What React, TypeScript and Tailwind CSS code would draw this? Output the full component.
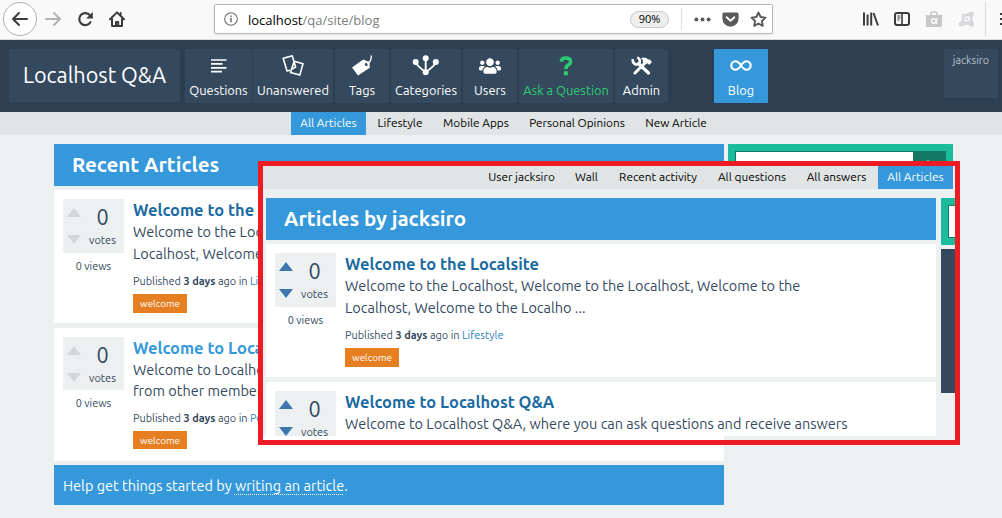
import type { ReactNode } from 'react';
import clsx from 'clsx';
import { FaUsers } from 'react-icons/fa';

/* ---------- Browser toolbar ---------- */

function BrowserBar() {
  return (
    <div className="flex h-10 items-start border-b border-[#dcdcdc] bg-[#f9f9fa] pl-[3px] font-['Open_Sans','Noto_Sans',sans-serif]">
      <div className="mt-[2px] flex size-[34px] shrink-0 items-center justify-center rounded-full border border-[#b1b1b1] bg-white">
        <svg width="18" height="16" viewBox="0 0 18 16" fill="none" stroke="#3c3c3c" strokeWidth="2" strokeLinecap="round" strokeLinejoin="round">
          <path d="M16 8H2M8 2 2 8l6 6" />
        </svg>
      </div>
      <div className="mt-[11px] ml-[7px] flex shrink-0">
        <svg width="18" height="16" viewBox="0 0 18 16" fill="none" stroke="#b4b4b4" strokeWidth="2" strokeLinecap="round" strokeLinejoin="round">
          <path d="M2 8h14M10 2l6 6-6 6" />
        </svg>
        <svg className="ml-[15px]" width="17" height="16" viewBox="0 0 17 16" fill="none" stroke="#3c3c3c" strokeWidth="2.2">
          <path d="M13.4 11.2A6 6 0 1 1 13 4.4" strokeLinecap="round" />
          <path d="M15.8 1v6.6H9.2z" fill="#3c3c3c" stroke="none" />
        </svg>
        <svg className="ml-[14px]" width="18" height="16" viewBox="0 0 18 16" fill="none" stroke="#3c3c3c" strokeWidth="2" strokeLinecap="round" strokeLinejoin="round">
          <path d="M2 8.2 9 1.4l7 6.8" />
          <path d="M4 8v7h10V8" />
          <path d="M8 15v-4h2.2v4M12.6 2v2" />
        </svg>
      </div>
      <div className="mt-1 ml-[88px] flex h-[30px] w-[559px] shrink-0 items-center rounded-[2px] border border-[#b8b8b8] bg-white shadow-[0_1px_3px_rgba(0,0,0,0.08)]">
        <svg className="ml-[9px]" width="14" height="14" viewBox="0 0 14 14" fill="none" stroke="#6b6b6b" strokeWidth="1.1">
          <circle cx="7" cy="7" r="6.3" />
          <path d="M7 6v4.2M7 3.4v1.5" strokeWidth="1.5" />
        </svg>
        <span className="ml-[10px] w-[382px] pt-px text-[13px] leading-5 text-[#7b7b7b]">
          <span className="text-black">localhost</span>/qa/site/blog
        </span>
        <span className="flex h-[17px] w-[39px] items-center justify-center rounded-full border border-[#c6c6c6] bg-[#eeeeee] pt-px text-[11px] text-black">90%</span>
        <span className="ml-3 h-[22px] w-px bg-[#dedede]" />
        <svg className="ml-[12px]" width="17" height="5" viewBox="0 0 17 5" fill="#5a5a5a">
          <circle cx="2.4" cy="2.5" r="2" />
          <circle cx="8.5" cy="2.5" r="2" />
          <circle cx="14.6" cy="2.5" r="2" />
        </svg>
        <svg className="ml-[11px]" width="17" height="15" viewBox="0 0 17 15">
          <path d="M2 .5h13A1.600 1.600 0 0 1 16.600 2v4.600a8.100 8.100 0 0 1-16.200 0V2A1.600 1.600 0 0 1 2 .5z" fill="#5a5a5a" />
          <path d="m4.700 5.200 3.800 3.700 3.800-3.700" fill="none" stroke="#fff" strokeWidth="2" strokeLinecap="round" strokeLinejoin="round" />
        </svg>
        <svg className="ml-[11px]" width="17" height="17" viewBox="0 0 17 17" fill="none" stroke="#5a5a5a" strokeWidth="1.900" strokeLinejoin="round">
          <path d="m8.500 1.500 2.100 4.500 4.900.6-3.600 3.400.9 4.900-4.300-2.400-4.300 2.400.9-4.900L1.500 6.600l4.900-.6z" />
        </svg>
      </div>
      <div className="mt-[2px] ml-[90px] flex h-[34px] items-center">
        <svg width="16" height="14" viewBox="0 0 16 14" stroke="#3c3c3c" strokeWidth="2" fill="none">
          <path d="M1 .5v13M4.600 2.500v11M8.200.5v13M10.500 1l4.500 12.500" />
        </svg>
        <svg className="ml-[15px]" width="16" height="14" viewBox="0 0 16 14" fill="none" stroke="#3c3c3c">
          <rect x="1" y="1" width="14" height="12" rx="2" strokeWidth="2" />
          <path d="M8 1v12" strokeWidth="1.600" />
          <path d="M3.300 4h3M3.300 6h3M3.300 8h2" />
        </svg>
        <svg className="ml-[16px]" width="16" height="16" viewBox="0 0 16 16" fill="none">
          <path d="M0 4h16v12H0z" fill="#c8c8c8" />
          <path d="M5 4V2.200Q5 1 6.200 1h3.600Q11 1 11 2.200V4" stroke="#c8c8c8" strokeWidth="1.600" />
          <circle cx="7.800" cy="10" r="2.200" stroke="#f9f9fa" strokeWidth="1.500" />
          <path d="M10.500 7v6" stroke="#f9f9fa" strokeWidth="1.500" />
        </svg>
        <svg className="ml-[16px]" width="17" height="17" viewBox="0 0 17 17" fill="none">
          <path d="M4.500 2.500Q8 3.500 11 1.500q3.500-1.600 4.800.2.900 2-1.300 4.300-.8 2.500.9 5 1.600 3-.4 4.500-2.200 1.200-4.500-1.500-2.500-1-5 .8-3 1.600-4.600-.2-1.300-2.600 1.600-3.800 1.700-1.300 1.300-4.300z" fill="#d8d8dc" />
          <circle cx="8.800" cy="7.800" r="2" stroke="#f9f9fa" strokeWidth="1.300" />
          <path d="M11.300 5.200v5" stroke="#f9f9fa" strokeWidth="1.300" />
        </svg>
        <span className="ml-[10px] h-[34px] w-px bg-[#d8d8d8]" />
        <svg className="ml-[14px]" width="3" height="14" viewBox="0 0 3 14" stroke="#3c3c3c" strokeWidth="2">
          <path d="M0 2h3M0 7h3M0 12h3" />
        </svg>
      </div>
    </div>
  );
}

/* ---------- Navigation icons ---------- */

const linesIcon = (
  <svg width="16" height="14" viewBox="0 0 16 14" stroke="currentColor" strokeWidth="1.700">
    <path d="M0 1h15.500M0 4.900h11.500M0 8.800h15.500M0 12.700h11" />
  </svg>
);

const cardsIcon = (
  <svg width="22" height="21" viewBox="0 0 22 21" fill="none" stroke="currentColor" strokeWidth="1.600" strokeLinejoin="round">
    <path d="M8.300 15.200 5 16 1.200 3.200 10.300.9l1.300 4.600" />
    <path d="M12.200 6.300 21 8.800l-3.200 11.300-9.300-2.600z" />
    <path d="M11.600 5.500 13.600 12l-4.500 2.600" />
  </svg>
);

const tagIcon = (
  <svg width="22" height="21" viewBox="0 0 22 21" fill="none">
    <path fillRule="evenodd" d="M12.200 4.400 18.400 7l.4 5.800L7 20.500 1 12.400zM15.400 7.700a1.700 1.700 0 1 0 .1 3.400 1.700 1.700 0 0 0-.1-3.400z" fill="currentColor" />
    <path d="M16 9.300Q20.800 6 20.300.5" stroke="currentColor" strokeWidth="1.300" />
  </svg>
);

const treeIcon = (
  <svg width="28" height="21" viewBox="0 0 28 21" fill="currentColor">
    <path d="M4 7.500q1.500 4 9.600 9.500M23.600 7.500q-1.500 4-9.800 9.500M13.700 4v13" fill="none" stroke="currentColor" strokeWidth="1.900" />
    <circle cx="3.700" cy="7" r="3" />
    <circle cx="13.700" cy="3.300" r="3" />
    <circle cx="23.800" cy="7" r="3" />
    <circle cx="13.700" cy="17.300" r="3" />
  </svg>
);

const questionIcon = (
  <svg width="14" height="20" viewBox="0 0 14 20" fill="none" stroke="currentColor">
    <path d="M2.200 5.600Q2.600 2 6.800 2q4.700 0 4.700 3.700 0 2-2.400 3.400-2.200 1.300-2.200 4" strokeWidth="3.500" />
    <path d="M4.900 15.300h4v4h-4z" fill="currentColor" stroke="none" />
  </svg>
);

const toolsIcon = (
  <svg width="22" height="19" viewBox="0 0 22 19" fill="none" stroke="currentColor">
    <path d="M7.500 7.500 17.500 17" strokeWidth="3.200" strokeLinecap="round" />
    <path d="M2 3.200a4 4 0 0 0 6 4.600A4.200 4.200 0 0 0 6.300 1.400" strokeWidth="2.600" />
    <path d="M4 17 14.500 6.500" strokeWidth="3" strokeLinecap="round" />
    <path d="M10 2.400Q14 .2 17.500 3.800l1-.5L21 6l-2.600 2.700L16 7.200l-2.200.8-2.300-2.300.6-1.500z" fill="currentColor" stroke="none" />
  </svg>
);

const infinityIcon = (
  <svg width="22" height="11" viewBox="0 0 22 11" fill="none" stroke="currentColor" strokeWidth="2.100">
    <path d="M11 5.500C9 2.500 7.500 1.300 5.500 1.300a4.200 4.200 0 0 0 0 8.400C7.500 9.700 9 8.500 11 5.500s3.500-4.200 5.500-4.200a4.200 4.200 0 0 1 0 8.400C14.500 9.700 13 8.500 11 5.500z" />
  </svg>
);

type NavTileProps = { label: string; width: string; className?: string; children: ReactNode };

function NavTile({ label, width, className, children }: NavTileProps) {
  return (
    <a className={clsx('flex h-[54px] shrink-0 flex-col items-center', width, className ?? 'bg-[#34495e] text-white')}>
      <span className="flex h-[33px] items-center justify-center">{children}</span>
      <span className="text-[12.8px] leading-4 whitespace-nowrap">{label}</span>
    </a>
  );
}

function Header() {
  return (
    <header className="flex h-[72px] items-start bg-[#2c3e50] pt-[9px] pl-[9px]">
      <h1 className="h-[53px] w-[171px] shrink-0 bg-[#34495e] text-center text-[21.6px] leading-[53px] text-white">Localhost Q&amp;A</h1>
      <nav className="ml-[5px] flex">
        <div className="flex gap-px">
          <NavTile label="Questions" width="w-[67px]">{linesIcon}</NavTile>
          <NavTile label="Unanswered" width="w-[80px]">{cardsIcon}</NavTile>
        </div>
        <div className="ml-[2px] flex gap-[2px]">
          <NavTile label="Tags" width="w-[54px]">{tagIcon}</NavTile>
          <NavTile label="Categories" width="w-[70px]">{treeIcon}</NavTile>
          <NavTile label="Users" width="w-[54px]"><FaUsers size={22} /></NavTile>
          <NavTile label="Ask a Question" width="w-[94px]" className="bg-[#34495e] text-[#2ecc71]">{questionIcon}</NavTile>
          <NavTile label="Admin" width="w-[53px]">{toolsIcon}</NavTile>
        </div>
        <div className="ml-[46px]">
          <NavTile label="Blog" width="w-[54px]" className="bg-[#3498db] text-white">{infinityIcon}</NavTile>
        </div>
      </nav>
      <div className="ml-[176px] h-[49px] w-[54px] shrink-0 bg-[#34495e] pt-[3px] text-center text-[10.8px] leading-4 text-[#bdc3c7]">jacksiro</div>
    </header>
  );
}

/* ---------- Sub navigation ---------- */

type SubItem = { label: string; width: string; active?: boolean };

const blogItems: SubItem[] = [
  { label: 'All Articles', width: 'w-[75px]', active: true },
  { label: 'Lifestyle', width: 'w-[64px]' },
  { label: 'Mobile Apps', width: 'w-[84px]' },
  { label: 'Personal Opinions', width: 'w-[114px]' },
  { label: 'New Article', width: 'w-[80px]' },
];

const userItems: SubItem[] = [
  { label: 'User jacksiro', width: 'w-[85px]' },
  { label: 'Wall', width: 'w-[41px]' },
  { label: 'Recent activity', width: 'w-[98px]' },
  { label: 'All questions', width: 'w-[86px]' },
  { label: 'All answers', width: 'w-[79px]' },
  { label: 'All Articles', width: 'w-[75px]', active: true },
];

function SubNav({ items, className }: { items: SubItem[]; className: string }) {
  return (
    <nav className={clsx('flex h-[23px] gap-[2px] bg-[#e0e4e4]', className)}>
      {items.map((item) => (
        <a
          key={item.label}
          className={clsx('h-[23px] shrink-0 text-center text-[11.8px] leading-[22px] whitespace-nowrap', item.width, item.active ? 'bg-[#3498db] text-white' : 'text-black')}
        >
          {item.label}
        </a>
      ))}
    </nav>
  );
}

/* ---------- Article list ---------- */

type ArticleProps = {
  title: string;
  titleColor: string;
  arrowColor: string;
  lines: string[];
  category: string;
  compact?: boolean;
};

function Article({ title, titleColor, arrowColor, lines, category, compact }: ArticleProps) {
  return (
    <article className="flex h-[133px] gap-[9px] bg-white pt-[9px] pl-[9px] text-[#34495e]">
      <div className="w-[61px] shrink-0">
        <div className={clsx('flex bg-[#ecf0f1]', compact ? 'h-[53px]' : 'h-[54px]')}>
          <div className={clsx('flex w-[21px] flex-col items-center pt-[9px]', arrowColor)}>
            <svg width="14" height="9" viewBox="0 0 14 9" fill="currentColor"><path d="M7 0l7 9H0z" /></svg>
            <svg className="mt-[18px]" width="14" height="9" viewBox="0 0 14 9" fill="currentColor"><path d="M7 9l7-9H0z" /></svg>
          </div>
          <div className="flex w-[37px] flex-col items-center pt-1">
            <span className="text-[21.6px] leading-7">0</span>
            <span className="mt-[2px] text-[11px] leading-[14px]">votes</span>
          </div>
        </div>
        <div className="mt-[5px] text-center text-[10.8px] leading-4">0 views</div>
      </div>
      <div className="whitespace-nowrap">
        <h3 className={clsx('h-[23px] text-[16.4px] leading-[22px] font-bold', titleColor)}>{title}</h3>
        <p className={clsx('text-[14.47px]', compact ? 'leading-[21px]' : 'leading-[21.5px]')}>
          {lines.map((line) => (
            <span key={line} className="block">{line}</span>
          ))}
        </p>
        <p className="mt-[8px] text-[10.9px] leading-4">
          Published <b>3 days</b> ago in <a className="text-[#2980b9]">{category}</a>
        </p>
        <a className={clsx('mt-[5px] block w-[54px] bg-[#e67e22] text-center text-[9.9px] leading-[19px] text-white', compact ? 'h-[18px]' : 'h-[19px]')}>welcome</a>
      </div>
    </article>
  );
}

function PageTitle({ children }: { children: ReactNode }) {
  return <h2 className="h-[42px] bg-[#3498db] pl-[18px] text-[20.5px] leading-[41px] font-bold text-white">{children}</h2>;
}

/* ---------- Profile window ---------- */

function ProfileWindow() {
  return (
    <section className="absolute top-[161px] left-[258px] h-[284px] w-[702px] border-5 border-[#ed1c24]">
      <div className="h-[270px] overflow-hidden bg-[#ecf0f1]">
        <SubNav items={userItems} className="w-[690px] justify-end" />
        <div className="mt-[9px] flex gap-[5px] pl-[3px]">
          <div className="w-[670px] shrink-0">
            <PageTitle>Articles by jacksiro</PageTitle>
            <div className="mt-1 flex flex-col gap-[5px]">
              <Article
                title="Welcome to the Localsite"
                titleColor="text-[#1a6b9f]"
                arrowColor="text-[#3c78ad]"
                lines={['Welcome to the Localhost, Welcome to the Localhost, Welcome to the', 'Localhost, Welcome to the Localho ...']}
                category="Lifestyle"
              />
              <Article
                title="Welcome to Localhost Q&A"
                titleColor="text-[#1a6b9f]"
                arrowColor="text-[#3c78ad]"
                lines={['Welcome to Localhost Q&A, where you can ask questions and receive answers']}
                category="Personal Opinions"
              />
            </div>
          </div>
          <aside className="w-[14px] overflow-hidden">
            <div className="h-[47px] w-[225px] bg-[#1abc9c] p-[7px]">
              <div className="h-[33px] border border-[#16786a] bg-white" />
            </div>
            <div className="mt-1 h-[144px] w-[225px] bg-[#34495e]" />
          </aside>
        </div>
      </div>
    </section>
  );
}

export default function App() {
  return (
    <div className="relative h-[518px] w-[1002px] overflow-hidden bg-[#ecf0f1] font-['Ubuntu','Noto_Sans',sans-serif]">
      <BrowserBar />
      <Header />
      <SubNav items={blogItems} className="pl-[291px]" />
      <main className="mt-[9px] flex items-start gap-1 pl-[54px]">
        <div className="w-[670px] shrink-0">
          <PageTitle>Recent Articles</PageTitle>
          <div className="mt-1 flex flex-col gap-[5px]">
            <Article
              title="Welcome to the Localsite"
              titleColor="text-[#1a6b9f]"
              arrowColor="text-[#d3d7d8]"
              lines={['Welcome to the Localhost, Welcome to the Localhost, Welcome to the', 'Localhost, Welcome to the Localho ...']}
              category="Lifestyle"
            />
            <Article
              title="Welcome to Localhost Q&A"
              titleColor="text-[#3498db]"
              arrowColor="text-[#d3d7d8]"
              lines={['Welcome to Localhost Q&A, where you can ask questions and receive answers', 'from other members of the community.']}
              category="Personal Opinions"
              compact
            />
          </div>
          <p className="mt-1 h-10 bg-[#3498db] pt-px pl-[9px] text-[14.5px] leading-10 text-white">
            Help get things started by{' '}
            <a className="underline decoration-dotted decoration-1 underline-offset-[3px] [text-decoration-skip-ink:none]">writing an article</a>.
          </p>
        </div>
        <aside className="h-[47px] w-[225px] shrink-0 bg-[#1abc9c] p-[7px]">
          <div className="flex h-[33px] border border-[#147865] bg-white">
            <div className="flex-1" />
            <div className="flex w-8 justify-center bg-[#147865] pt-2">
              <svg width="14" height="14" viewBox="0 0 14 14" fill="none" stroke="#fff" strokeWidth="2">
                <circle cx="6" cy="6" r="4.500" />
                <path d="m9.500 9.500 4 4" />
              </svg>
            </div>
          </div>
        </aside>
      </main>
      <ProfileWindow />
    </div>
  );
}
